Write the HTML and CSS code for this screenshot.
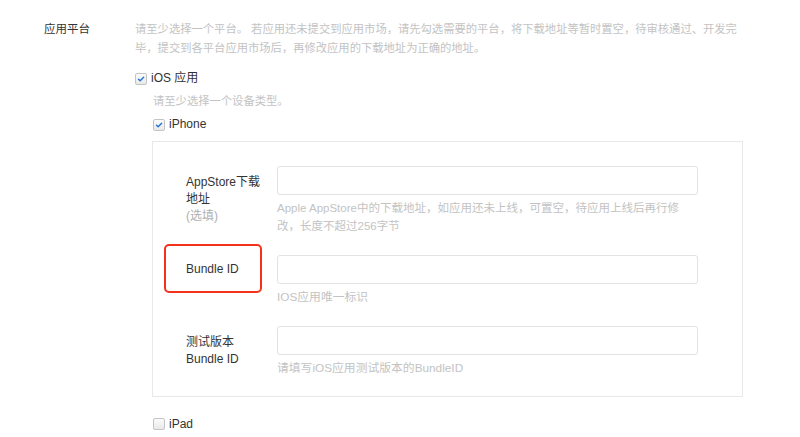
FILE: index.html
```html
<!DOCTYPE html>
<html lang="zh-CN">
<head>
<meta charset="utf-8">
<title>应用平台</title>
<link rel="stylesheet" href="styles.css">
</head>
<body>
<div class="page">
  <div class="row">
    <div class="row-label">应用平台</div>
    <div class="row-body">
      <div class="desc">请至少选择一个平台。 若应用还未提交到应用市场，请先勾选需要的平台，将下载地址等暂时置空，待审核通过、开发完毕，提交到各平台应用市场后，再修改应用的下载地址为正确的地址。</div>
      <label class="check-line first">
        <span class="cb checked"><svg viewBox="0 0 12 12" width="12" height="12"><path d="M3 6.2 L5 8.2 L9.2 3.8" fill="none" stroke="#1f6fd6" stroke-width="1.6" stroke-linecap="round" stroke-linejoin="round"/></svg></span>
        <span class="cb-text">iOS 应用</span>
      </label>
      <div class="sub">
        <div class="sub-desc">请至少选择一个设备类型。</div>
        <label class="check-line">
          <span class="cb checked"><svg viewBox="0 0 12 12" width="12" height="12"><path d="M3 6.2 L5 8.2 L9.2 3.8" fill="none" stroke="#1f6fd6" stroke-width="1.6" stroke-linecap="round" stroke-linejoin="round"/></svg></span>
          <span class="cb-text">iPhone</span>
        </label>
        <div class="box">
          <div class="form-row">
            <div class="f-label">AppStore下载地址<div class="optional">(选填)</div></div>
            <div class="f-field">
              <div class="input"></div>
              <div class="help help-wrap">Apple AppStore中的下载地址，如应用还未上线，可置空，待应用上线后再行修改，长度不超过256字节</div>
            </div>
          </div>
          <div class="form-row">
            <div class="f-label f-label-single">Bundle ID<span class="highlight"></span></div>
            <div class="f-field">
              <div class="input"></div>
              <div class="help">IOS应用唯一标识</div>
            </div>
          </div>
          <div class="form-row">
            <div class="f-label">测试版本<br>Bundle ID</div>
            <div class="f-field">
              <div class="input"></div>
              <div class="help">请填写iOS应用测试版本的BundleID</div>
            </div>
          </div>
        </div>
        <label class="check-line ipad">
          <span class="cb"></span>
          <span class="cb-text">iPad</span>
        </label>
      </div>
    </div>
  </div>
</div>
</body>
</html>
```
FILE: styles.css
```css
* { box-sizing: border-box; }
html, body { margin: 0; padding: 0; background: #ffffff; }
body {
  font-family: "Liberation Sans", "Noto Sans CJK SC", sans-serif;
  font-size: 11.5px;
  color: #3a3a3a;
}
.page { padding: 20px 0 0 44px; }
.row { display: flex; }
.row-label { width: 91px; line-height: 19px; color: #333; flex: none; }
.row-body { display: flex; flex-direction: column; }
.desc { width: 612px; line-height: 19px; color: #c3c3c3; font-size: 11.3px; }
.check-line { display: flex; align-items: center; height: 23px; line-height: 23px; color: #333; font-size: 12px; }
.check-line.first { margin-top: 9px; }
.cb {
  width: 12px; height: 12px; flex: none;
  border: 1px solid #c4c4c4; border-radius: 2px;
  background: linear-gradient(#fbfbfb, #e9e9e9);
  display: flex; align-items: center; justify-content: center;
}
.cb svg { display: block; }
.cb-text { margin-left: 4px; }
.sub { margin-left: 17px; }
.sub-desc { line-height: 23px; color: #c3c3c3; padding-left: 1px; font-size: 11.3px; }
.sub > .check-line { padding-left: 1px; }
.box {
  margin-top: 5px;
  width: 591px;
  border: 1px solid #e8e8e8;
  padding: 24px 44px 19px 33px;
}
.form-row { display: grid; grid-template-columns: 91px 421px; }
.form-row + .form-row { margin-top: 20px; }
.f-label { line-height: 17px; padding-top: 7.5px; color: #333; padding-right: 10px; position: relative; font-size: 12px; }
.f-label-single { padding-top: 6px; }
.optional { color: #b0b0b0; }
.input { height: 29px; border: 1px solid #e3e3e3; border-radius: 3px; background: #fff; }
.help { margin-top: 4px; line-height: 18px; color: #c3c3c3; font-size: 11.8px; }
.help-wrap { width: 418px; font-size: 11.5px; }
.highlight {
  position: absolute; left: -22px; top: -11px;
  width: 98px; height: 49px;
  border: 2px solid #f4321c; border-radius: 5px;
}
.ipad { margin-top: 15.5px; }
```
